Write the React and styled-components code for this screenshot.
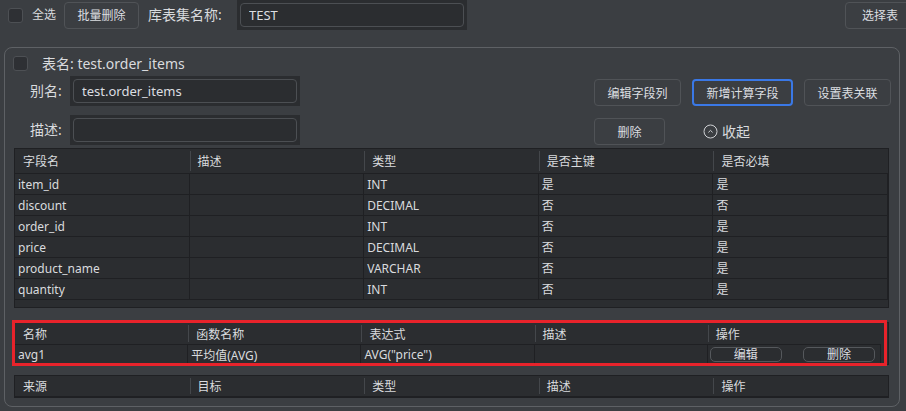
import React from 'react';
import styled, { createGlobalStyle } from 'styled-components';

const FONT = '"Noto Sans", "Noto Sans CJK SC", sans-serif';

const Global = createGlobalStyle`
  html, body { margin: 0; padding: 0; background: #3b3e42; overflow: hidden; }
  body { font-family: ${FONT}; color: #d9dbde; }
  * { box-sizing: border-box; }
`;

const Page = styled.div`
  width: 906px;
  height: 411px;
  background: #3b3e42;
  overflow: hidden;
`;

const TopBar = styled.div`
  display: flex;
  align-items: center;
  height: 30px;
  padding-left: 8px;
`;

const CheckBox = styled.span`
  flex: none;
  display: inline-block;
  width: 15px;
  height: 15px;
  border: 1px solid #4d5054;
  border-radius: 3px;
  background: #2e3034;
`;

const SmallText = styled.span`
  font-size: 12px;
  line-height: 16px;
  margin: 0 8px 0 9px;
  white-space: nowrap;
`;

const Button = styled.button`
  flex: none;
  width: ${p => p.$w}px;
  height: 27px;
  margin: ${p => p.$m || '0'};
  padding: 0;
  background: #3b3e42;
  color: #dcdee1;
  border: ${p => (p.$active ? '2px solid #3a78e6' : '1px solid #505357')};
  border-radius: 4px;
  font: 12px ${FONT};
  white-space: nowrap;
`;

const BarLabel = styled.span`
  flex: none;
  width: 77px;
  font-size: 14px;
  line-height: 18px;
  margin: 0 12px 0 9px;
  white-space: nowrap;
`;

const InputBlock = styled.div`
  flex: none;
  width: 230px;
  height: 30px;
  padding: 3px;
  background: #2b2d30;
  display: flex;
`;

const TextInput = styled.input`
  flex: 1;
  min-width: 0;
  border: 1px solid #4c4f53;
  border-radius: 4px;
  background: #2b2d30;
  color: #dcdee1;
  font: 13px ${FONT};
  padding: 0 8px;
  outline: none;
`;

const Spacer = styled.div`
  flex: 1;
`;

const Panel = styled.section`
  margin: 17px 0 0 4px;
  width: 896px;
  height: 360px;
  border: 1px solid #5e6165;
  border-radius: 8px;
  display: flex;
  flex-direction: column;
`;

const TitleRow = styled.div`
  display: flex;
  align-items: center;
  height: 15px;
  margin: 8px 0 0 8px;
`;

const Title = styled.span`
  font-size: 14px;
  line-height: 15px;
  margin-left: 14px;
`;

const FormArea = styled.div`
  display: flex;
  margin-top: 5px;
  padding-right: 8px;
`;

const Fields = styled.div`
  display: flex;
  flex-direction: column;
  gap: 9px;
  padding-left: 25px;
`;

const FieldRow = styled.div`
  display: flex;
  align-items: center;
`;

const FieldLabel = styled.span`
  width: 40px;
  font-size: 14px;
  line-height: 18px;
`;

const Actions = styled.div`
  margin-left: auto;
  padding-top: 3px;
  display: flex;
  flex-direction: column;
  gap: 12px;
`;

const ActionRow = styled.div`
  display: flex;
  align-items: center;
  gap: 11px;
`;

const Collapse = styled.span`
  display: flex;
  align-items: center;
  gap: 4px;
  margin-left: 27px;
  font-size: 14px;
  line-height: 18px;
`;

const Table = styled.div`
  position: relative;
  flex: none;
  margin: ${p => p.$mt}px 10px 0 9px;
  height: ${p => p.$h}px;
  background: #2b2d30;
  border: 1px solid #1f2023;
`;

const Highlight = styled.div`
  position: absolute;
  left: -3px;
  top: -3px;
  right: 1px;
  bottom: -2px;
  border: 3px solid #e8232b;
  pointer-events: none;
`;

const Grid = styled.div`
  display: grid;
  grid-template-columns: repeat(5, 1fr);
  width: ${p => (p.$w ? `${p.$w}px` : 'auto')};
`;

const HeadCell = styled.div`
  position: relative;
  height: ${p => p.$h}px;
  display: flex;
  align-items: center;
  padding-left: 8px;
  font-size: 12px;
  border-bottom: 1px solid #1f2023;
  white-space: nowrap;
  &:not(:first-child)::before {
    content: '';
    position: absolute;
    left: 0;
    top: 2px;
    bottom: 2px;
    width: 1px;
    background: #44474b;
  }
`;

const Cell = styled.div`
  height: ${p => p.$h}px;
  display: flex;
  align-items: center;
  padding-left: 3px;
  font-size: 12px;
  border-bottom: 1px solid #1f2023;
  border-right: 1px solid #1f2023;
  white-space: nowrap;
  overflow: hidden;
`;

const ActionCell = styled(Cell)`
  justify-content: space-between;
  padding: 0 5px 0 2px;
`;

const RowButton = styled.button`
  width: 72px;
  height: 15px;
  padding: 0;
  background: transparent;
  border: 1px solid #55585c;
  border-radius: 5px;
  color: #dcdee1;
  font: 12px/13px ${FONT};
`;

const fieldHeaders = ['字段名', '描述', '类型', '是否主键', '是否必填'];
const fields = [
  ['item_id', '', 'INT', '是', '是'],
  ['discount', '', 'DECIMAL', '否', '否'],
  ['order_id', '', 'INT', '否', '是'],
  ['price', '', 'DECIMAL', '否', '是'],
  ['product_name', '', 'VARCHAR', '否', '是'],
  ['quantity', '', 'INT', '否', '是'],
];
const calcHeaders = ['名称', '函数名称', '表达式', '描述', '操作'];
const relHeaders = ['来源', '目标', '类型', '描述', '操作'];

const CollapseIcon = () => (
  <svg width="15" height="15" viewBox="0 0 15 15">
    <circle cx="7.5" cy="7.5" r="6.5" fill="none" stroke="#cfd1d4" strokeWidth="1" />
    <path d="M5.4 8.4 L7.5 6.4 L9.6 8.4" fill="none" stroke="#cfd1d4" strokeWidth="1" />
  </svg>
);

export default function App() {
  return (
    <Page>
      <Global />
      <TopBar>
        <CheckBox />
        <SmallText>全选</SmallText>
        <Button $w={75}>批量删除</Button>
        <BarLabel>库表集名称:</BarLabel>
        <InputBlock>
          <TextInput readOnly value="TEST" />
        </InputBlock>
        <Spacer />
        <Button $w={70} $m="0 -9px 0 0">选择表</Button>
      </TopBar>

      <Panel>
        <TitleRow>
          <CheckBox />
          <Title>表名: test.order_items</Title>
        </TitleRow>

        <FormArea>
          <Fields>
            <FieldRow>
              <FieldLabel>别名:</FieldLabel>
              <InputBlock>
                <TextInput readOnly value="test.order_items" />
              </InputBlock>
            </FieldRow>
            <FieldRow>
              <FieldLabel>描述:</FieldLabel>
              <InputBlock>
                <TextInput readOnly value="" />
              </InputBlock>
            </FieldRow>
          </Fields>
          <Actions>
            <ActionRow>
              <Button $w={87}>编辑字段列</Button>
              <Button $w={101} $active>新增计算字段</Button>
              <Button $w={87}>设置表关联</Button>
            </ActionRow>
            <ActionRow>
              <Button $w={71}>删除</Button>
              <Collapse>
                <CollapseIcon />
                收起
              </Collapse>
            </ActionRow>
          </Actions>
        </FormArea>

        <Table $mt={3} $h={160}>
          <Grid>
            {fieldHeaders.map(h => (
              <HeadCell key={h} $h={25}>{h}</HeadCell>
            ))}
            {fields.map((row, i) =>
              row.map((v, j) => (
                <Cell key={`${i}-${j}`} $h={21}>{v}</Cell>
              ))
            )}
          </Grid>
        </Table>

        <Table $mt={14} $h={43}>
          <Grid $w={866}>
            {calcHeaders.map(h => (
              <HeadCell key={h} $h={22}>{h}</HeadCell>
            ))}
            <Cell $h={20}>avg1</Cell>
            <Cell $h={20}>平均值(AVG)</Cell>
            <Cell $h={20}>AVG("price")</Cell>
            <Cell $h={20} />
            <ActionCell $h={20}>
              <RowButton>编辑</RowButton>
              <RowButton>删除</RowButton>
            </ActionCell>
          </Grid>
          <Highlight />
        </Table>

        <Table $mt={10} $h={23}>
          <Grid>
            {relHeaders.map(h => (
              <HeadCell key={h} $h={21}>{h}</HeadCell>
            ))}
          </Grid>
        </Table>
      </Panel>
    </Page>
  );
}
